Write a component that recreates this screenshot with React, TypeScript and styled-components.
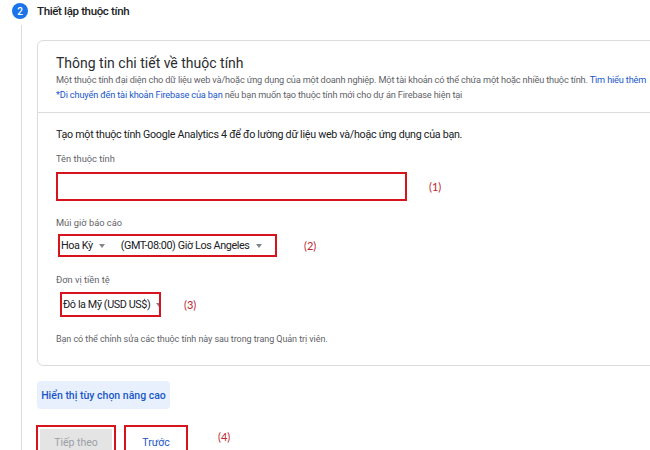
import React from "react";
import styled, { createGlobalStyle } from "styled-components";

const GlobalStyle = createGlobalStyle`
  html, body {
    margin: 0;
    padding: 0;
    background: #ffffff;
  }
  body {
    font-family: Roboto, "Noto Sans", Arial, sans-serif;
    color: #202124;
  }
`;

const Page = styled.div`
  width: 650px;
  height: 450px;
  overflow: hidden;
  background: #fff;
`;

const StepHeader = styled.div`
  display: flex;
  align-items: center;
  gap: 9px;
  padding: 1px 0 0 12px;
  height: 20px;
`;

const StepBadge = styled.div`
  width: 16px;
  height: 16px;
  border-radius: 50%;
  background: #1a73e8;
  color: #fff;
  font-size: 10px;
  font-weight: 500;
  display: flex;
  align-items: center;
  justify-content: center;
`;

const StepTitle = styled.div`
  font-size: 11.5px;
  font-weight: 500;
  letter-spacing: -0.35px;
  color: #202124;
`;

const StepBody = styled.div`
  margin: 4px 0 0 21px;
  padding: 15px 0 0 15px;
  border-left: 1px solid #dadce0;
  height: 440px;
`;

const Card = styled.div`
  width: 650px;
  border: 1px solid #dadce0;
  border-radius: 6px;
`;

const CardSection = styled.div<{ $divider?: boolean }>`
  padding: ${({ $divider }) => ($divider ? "13px 18px 10px" : "14px 18px 18px")};
  border-bottom: ${({ $divider }) => ($divider ? "1px solid #dadce0" : "none")};
`;

const SectionTitle = styled.div`
  font-size: 14px;
  line-height: 18px;
  color: #2b2d30;
`;

const Description = styled.div`
  font-size: 9.2px;
  line-height: 15px;
  letter-spacing: -0.16px;
  color: #5f6368;
  white-space: nowrap;
`;

const Link = styled.span`
  color: #1a57c8;
`;

const Lead = styled.div`
  font-size: 10.7px;
  line-height: 16px;
  letter-spacing: -0.27px;
  color: #202124;
`;

const FieldLabel = styled.div<{ $top: number }>`
  margin-top: ${({ $top }) => $top}px;
  font-size: 9.3px;
  line-height: 14px;
  color: #5f6368;
`;

const FieldRow = styled.div<{ $top: number; $gap: number }>`
  display: flex;
  align-items: center;
  gap: ${({ $gap }) => $gap}px;
  margin-top: ${({ $top }) => $top}px;
`;

const Highlight = styled.div<{ $w: number; $h: number; $shift?: number }>`
  box-sizing: border-box;
  flex-shrink: 0;
  overflow: hidden;
  width: ${({ $w }) => $w}px;
  height: ${({ $h }) => $h}px;
  margin-left: ${({ $shift }) => $shift || 0}px;
  border: 2px solid #d7141d;
  display: flex;
  align-items: center;
  padding-left: 1px;
  background: #fff;
`;

const SelectText = styled.span<{ $gap?: number }>`
  font-size: 10.8px;
  letter-spacing: -0.4px;
  color: #202124;
  margin-left: ${({ $gap }) => $gap || 0}px;
  white-space: nowrap;
`;

const Caret = styled.span`
  flex-shrink: 0;
  width: 0;
  height: 0;
  margin-left: 6px;
  border-left: 3.5px solid transparent;
  border-right: 3.5px solid transparent;
  border-top: 4px solid #80868b;
`;

const Note = styled.span`
  font-family: Lato, "Open Sans", sans-serif;
  font-size: 11px;
  color: #c0262d;
`;

const Hint = styled.div`
  margin-top: 15px;
  font-size: 9px;
  line-height: 15px;
  letter-spacing: -0.07px;
  color: #5f6368;
`;

const AdvancedButton = styled.div`
  margin-top: 15px;
  width: 133px;
  height: 28px;
  border-radius: 4px;
  background: #e8f0fe;
  color: #1a57c8;
  font-size: 10.5px;
  font-weight: 500;
  display: flex;
  align-items: center;
  justify-content: center;
`;

const ButtonRow = styled.div`
  display: flex;
  align-items: flex-start;
  margin-top: 16px;
  margin-left: -1px;
`;

const ActionButton = styled.div<{ $w: number; $disabled?: boolean }>`
  box-sizing: border-box;
  width: ${({ $w }) => $w}px;
  height: 32px;
  border: 2px solid #d7141d;
  padding: 2px;
  margin-right: 8px;
  & > span {
    display: flex;
    align-items: center;
    justify-content: center;
    height: 100%;
    background: ${({ $disabled }) => ($disabled ? "#e4e4e4" : "#fff")};
    color: ${({ $disabled }) => ($disabled ? "#9aa0a6" : "#1a57c8")};
    font-size: 10.5px;
    font-weight: 400;
    padding-top: 3px;
    box-sizing: border-box;
  }
`;

const ButtonNote = styled(Note)`
  margin: 5px 0 0 22px;
`;

export default function App() {
  return (
    <Page>
      <GlobalStyle />
      <StepHeader>
        <StepBadge>2</StepBadge>
        <StepTitle>Thiết lập thuộc tính</StepTitle>
      </StepHeader>
      <StepBody>
        <Card>
          <CardSection $divider>
            <SectionTitle>Thông tin chi tiết về thuộc tính</SectionTitle>
            <Description>
              Một thuộc tính đại diện cho dữ liệu web và/hoặc ứng dụng của một doanh nghiệp. Một tài khoản có thể chứa một hoặc nhiều thuộc tính.{" "}
              <Link>Tìm hiểu thêm</Link>
            </Description>
            <Description>
              <Link>*Di chuyển đến tài khoản Firebase của bạn</Link> nếu bạn muốn tạo thuộc tính mới cho dự án Firebase hiện tại
            </Description>
          </CardSection>
          <CardSection>
            <Lead>Tạo một thuộc tính Google Analytics 4 để đo lường dữ liệu web và/hoặc ứng dụng của bạn.</Lead>

            <FieldLabel $top={9}>Tên thuộc tính</FieldLabel>
            <FieldRow $top={6} $gap={22}>
              <Highlight $w={351} $h={29} />
              <Note>(1)</Note>
            </FieldRow>

            <FieldLabel $top={15}>Múi giờ báo cáo</FieldLabel>
            <FieldRow $top={4} $gap={27}>
              <Highlight $w={219} $h={23} $shift={2}>
                <SelectText>Hoa Kỳ</SelectText>
                <Caret />
                <SelectText $gap={16}>(GMT-08:00) Giờ Los Angeles</SelectText>
                <Caret />
              </Highlight>
              <Note>(2)</Note>
            </FieldRow>

            <FieldLabel $top={16}>Đơn vị tiền tệ</FieldLabel>
            <FieldRow $top={5} $gap={23}>
              <Highlight $w={101} $h={25} $shift={4}>
                <SelectText>Đô la Mỹ (USD US$)</SelectText>
                <Caret />
              </Highlight>
              <Note>(3)</Note>
            </FieldRow>

            <Hint>Bạn có thể chỉnh sửa các thuộc tính này sau trong trang Quản trị viên.</Hint>
          </CardSection>
        </Card>

        <AdvancedButton>Hiển thị tùy chọn nâng cao</AdvancedButton>

        <ButtonRow>
          <ActionButton $w={80} $disabled>
            <span>Tiếp theo</span>
          </ActionButton>
          <ActionButton $w={64}>
            <span>Trước</span>
          </ActionButton>
          <ButtonNote>(4)</ButtonNote>
        </ButtonRow>
      </StepBody>
    </Page>
  );
}
